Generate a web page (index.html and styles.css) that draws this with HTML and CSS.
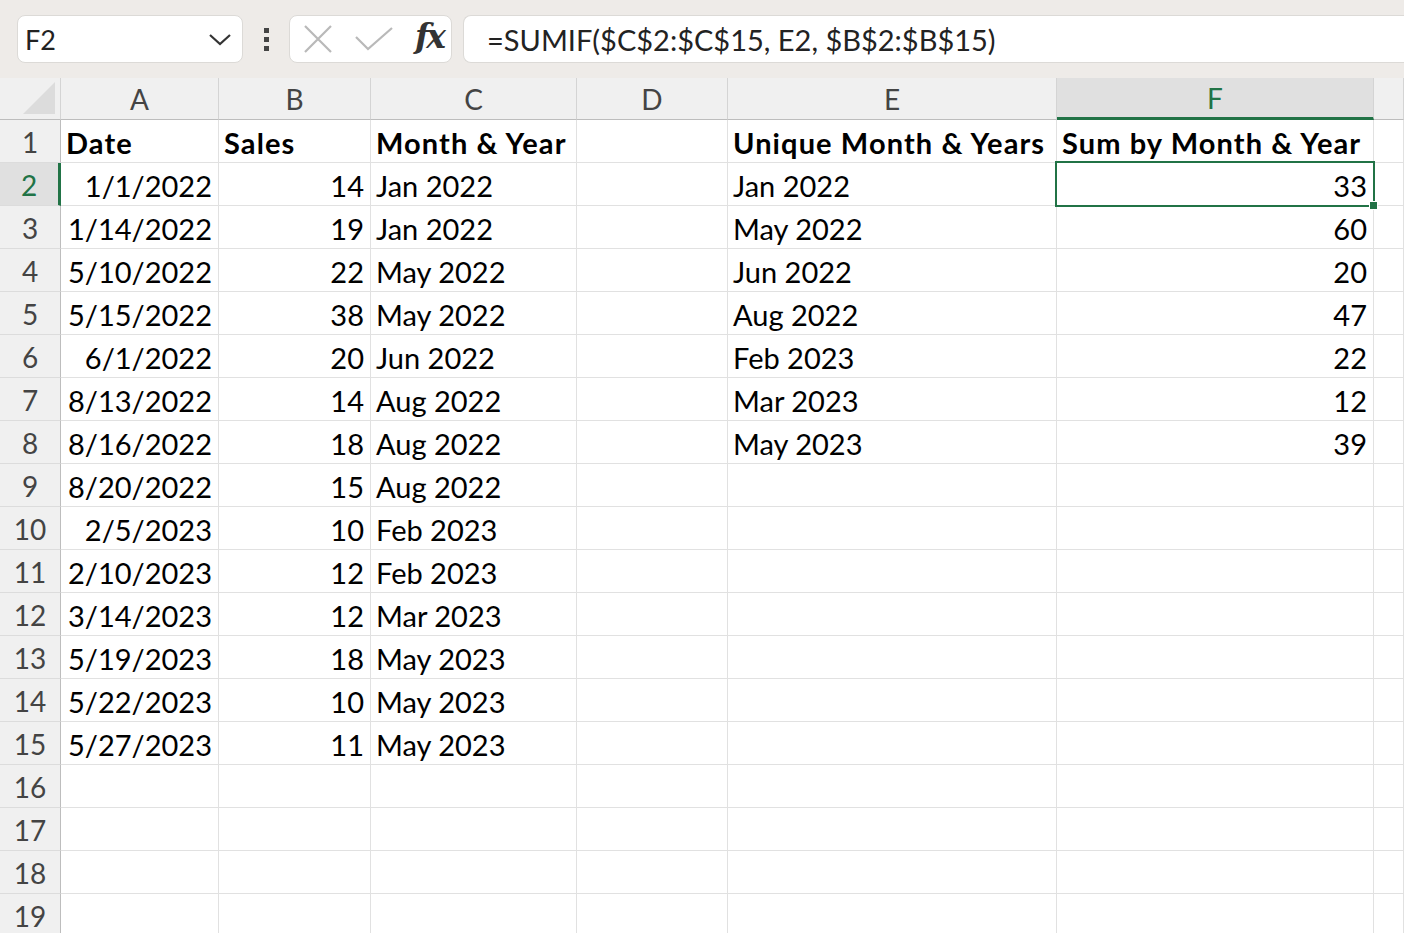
FILE: index.html
```html
<!DOCTYPE html>
<html lang="en">
<head>
    <meta charset="utf-8">
    <title>Sheet</title>
    <link rel="stylesheet" href="styles.css">
</head>
<body>
    <div class="toolbar">
        <div class="namebox">
            <span>F2</span>
            <svg class="chev" width="24" height="14" viewBox="0 0 24 14"><path d="M2 2 L12 11 L22 2" fill="none" stroke="#333" stroke-width="2.2"/></svg>
        </div>
        <div class="dots"><i></i><i></i><i></i></div>
        <div class="fxbox">
            <svg width="30" height="28" viewBox="0 0 30 28"><path d="M2 1 L28 27 M28 1 L2 27" stroke="#b9b9b9" stroke-width="2.2" fill="none"/></svg>
            <svg width="38" height="24" viewBox="0 0 38 24"><path d="M1 10 L13 22 L37 1" stroke="#b9b9b9" stroke-width="2.2" fill="none"/></svg>
            <span class="fx">fx</span>
        </div>
        <div class="formula">=SUMIF($C$2:$C$15, E2, $B$2:$B$15)</div>
    </div>

    <div class="sheet">
        <div class="row head">
            <div class="corner"></div>
            <div class="ch">A</div><div class="ch">B</div><div class="ch">C</div><div class="ch">D</div><div class="ch">E</div><div class="ch sel">F</div><div class="ch"></div>
        </div>
        <div class="row">
            <div class="rh">1</div>
            <div class="c b">Date</div><div class="c b">Sales</div><div class="c b">Month &amp; Year</div><div class="c"></div><div class="c b">Unique Month &amp; Years</div><div class="c b">Sum by Month &amp; Year</div><div class="c"></div>
        </div>
        <div class="row">
            <div class="rh sel">2</div>
            <div class="c r">1/1/2022</div><div class="c r">14</div><div class="c">Jan 2022</div><div class="c"></div><div class="c">Jan 2022</div><div class="c r active">33</div><div class="c"></div>
        </div>
        <div class="row">
            <div class="rh">3</div>
            <div class="c r">1/14/2022</div><div class="c r">19</div><div class="c">Jan 2022</div><div class="c"></div><div class="c">May 2022</div><div class="c r">60</div><div class="c"></div>
        </div>
        <div class="row">
            <div class="rh">4</div>
            <div class="c r">5/10/2022</div><div class="c r">22</div><div class="c">May 2022</div><div class="c"></div><div class="c">Jun 2022</div><div class="c r">20</div><div class="c"></div>
        </div>
        <div class="row">
            <div class="rh">5</div>
            <div class="c r">5/15/2022</div><div class="c r">38</div><div class="c">May 2022</div><div class="c"></div><div class="c">Aug 2022</div><div class="c r">47</div><div class="c"></div>
        </div>
        <div class="row">
            <div class="rh">6</div>
            <div class="c r">6/1/2022</div><div class="c r">20</div><div class="c">Jun 2022</div><div class="c"></div><div class="c">Feb 2023</div><div class="c r">22</div><div class="c"></div>
        </div>
        <div class="row">
            <div class="rh">7</div>
            <div class="c r">8/13/2022</div><div class="c r">14</div><div class="c">Aug 2022</div><div class="c"></div><div class="c">Mar 2023</div><div class="c r">12</div><div class="c"></div>
        </div>
        <div class="row">
            <div class="rh">8</div>
            <div class="c r">8/16/2022</div><div class="c r">18</div><div class="c">Aug 2022</div><div class="c"></div><div class="c">May 2023</div><div class="c r">39</div><div class="c"></div>
        </div>
        <div class="row">
            <div class="rh">9</div>
            <div class="c r">8/20/2022</div><div class="c r">15</div><div class="c">Aug 2022</div><div class="c"></div><div class="c"></div><div class="c"></div><div class="c"></div>
        </div>
        <div class="row">
            <div class="rh">10</div>
            <div class="c r">2/5/2023</div><div class="c r">10</div><div class="c">Feb 2023</div><div class="c"></div><div class="c"></div><div class="c"></div><div class="c"></div>
        </div>
        <div class="row">
            <div class="rh">11</div>
            <div class="c r">2/10/2023</div><div class="c r">12</div><div class="c">Feb 2023</div><div class="c"></div><div class="c"></div><div class="c"></div><div class="c"></div>
        </div>
        <div class="row">
            <div class="rh">12</div>
            <div class="c r">3/14/2023</div><div class="c r">12</div><div class="c">Mar 2023</div><div class="c"></div><div class="c"></div><div class="c"></div><div class="c"></div>
        </div>
        <div class="row">
            <div class="rh">13</div>
            <div class="c r">5/19/2023</div><div class="c r">18</div><div class="c">May 2023</div><div class="c"></div><div class="c"></div><div class="c"></div><div class="c"></div>
        </div>
        <div class="row">
            <div class="rh">14</div>
            <div class="c r">5/22/2023</div><div class="c r">10</div><div class="c">May 2023</div><div class="c"></div><div class="c"></div><div class="c"></div><div class="c"></div>
        </div>
        <div class="row">
            <div class="rh">15</div>
            <div class="c r">5/27/2023</div><div class="c r">11</div><div class="c">May 2023</div><div class="c"></div><div class="c"></div><div class="c"></div><div class="c"></div>
        </div>
        <div class="row">
            <div class="rh">16</div>
            <div class="c"></div><div class="c"></div><div class="c"></div><div class="c"></div><div class="c"></div><div class="c"></div><div class="c"></div>
        </div>
        <div class="row">
            <div class="rh">17</div>
            <div class="c"></div><div class="c"></div><div class="c"></div><div class="c"></div><div class="c"></div><div class="c"></div><div class="c"></div>
        </div>
        <div class="row">
            <div class="rh">18</div>
            <div class="c"></div><div class="c"></div><div class="c"></div><div class="c"></div><div class="c"></div><div class="c"></div><div class="c"></div>
        </div>
        <div class="row">
            <div class="rh">19</div>
            <div class="c"></div><div class="c"></div><div class="c"></div><div class="c"></div><div class="c"></div><div class="c"></div><div class="c"></div>
        </div>
    </div>
</body>
</html>
```

FILE: styles.css
```css
body {
    margin: 0;
    background-color: white;
    font-family: Lato, "Open Sans", sans-serif;
    color: black;
    overflow: hidden;
    height: 933px;
}

.toolbar {
    height: 78px;
    background-color: #eeebe8;
    display: flex;
    align-items: center;
    padding-left: 17px;
    box-sizing: border-box;
}

.namebox {
    width: 226px;
    height: 48px;
    box-sizing: border-box;
    background-color: white;
    border: 1px solid #dcdad7;
    border-radius: 8px;
    display: flex;
    align-items: center;
    justify-content: space-between;
    padding: 0 10px 0 7px;
    font-size: 27px;
    color: #222;
}

.chev {
    margin-top: 2px;
}

.dots {
    width: 46px;
    display: flex;
    flex-direction: column;
    align-items: center;
    gap: 4px;
}

.dots i {
    display: block;
    width: 5px;
    height: 5px;
    background-color: #444;
}

.fxbox {
    width: 163px;
    height: 48px;
    box-sizing: border-box;
    background-color: white;
    border: 1px solid #dcdad7;
    border-radius: 8px;
    display: flex;
    align-items: center;
    gap: 22px;
    padding-left: 13px;
}

.fx {
    font-family: "DejaVu Serif", "Liberation Serif", serif;
    font-style: italic;
    font-weight: bold;
    font-size: 33px;
    color: #333;
    margin-top: -6px;
    letter-spacing: -3px;
}

.formula {
    flex: 1;
    margin-left: 11px;
    height: 48px;
    box-sizing: border-box;
    background-color: white;
    border: 1px solid #dcdad7;
    border-right: none;
    border-radius: 8px 0 0 8px;
    display: flex;
    align-items: center;
    padding-left: 23px;
    font-size: 29px;
    color: #222;
}

.row {
    display: grid;
    grid-template-columns: 61px 158px 152px 206px 151px 329px 317px 1fr;
    height: 43px;
}

.row.head {
    height: 42px;
    background-color: #f0f0f0;
}

.corner {
    position: relative;
    border-right: 1px solid #d4d4d4;
    border-bottom: 1px solid #bdbdbd;
}

.corner::after {
    content: "";
    position: absolute;
    right: 5px;
    bottom: 5px;
    border-style: solid;
    border-width: 0 0 32px 32px;
    border-color: transparent transparent #dcdcdc transparent;
}

.ch {
    border-right: 1px solid #d4d4d4;
    border-bottom: 1px solid #bdbdbd;
    display: flex;
    align-items: center;
    justify-content: center;
    font-size: 28px;
    color: #444;
    padding-top: 1px;
}

.ch.sel {
    background-color: #e0e0e0;
    color: #217346;
    border-bottom: 3px solid #217346;
}

.rh {
    background-color: #f0f0f0;
    border-right: 1px solid #bdbdbd;
    border-bottom: 1px solid #dcdcdc;
    display: flex;
    align-items: flex-end;
    justify-content: center;
    padding-bottom: 3px;
    font-size: 28px;
    color: #444;
}

.rh.sel {
    background-color: #e0e0e0;
    color: #217346;
    border-right: 3px solid #217346;
}

.c {
    border-right: 1px solid #e1e1e1;
    border-bottom: 1px solid #e1e1e1;
    display: flex;
    align-items: flex-end;
    padding: 0 6px 2px 5px;
    font-size: 29px;
    white-space: nowrap;
    overflow: visible;
}

.c.b {
    font-weight: bold;
    letter-spacing: 1.1px;
}

.c.r {
    justify-content: flex-end;
}

.c.active {
    position: relative;
}

.c.active::after {
    content: "";
    position: absolute;
    left: -2px;
    top: -2px;
    right: -2px;
    bottom: -2px;
    border: 2px solid #217346;
}

.c.active::before {
    content: "";
    position: absolute;
    right: -5px;
    bottom: -5px;
    width: 7px;
    height: 7px;
    background-color: #217346;
    border: 1px solid white;
    z-index: 1;
}
```
